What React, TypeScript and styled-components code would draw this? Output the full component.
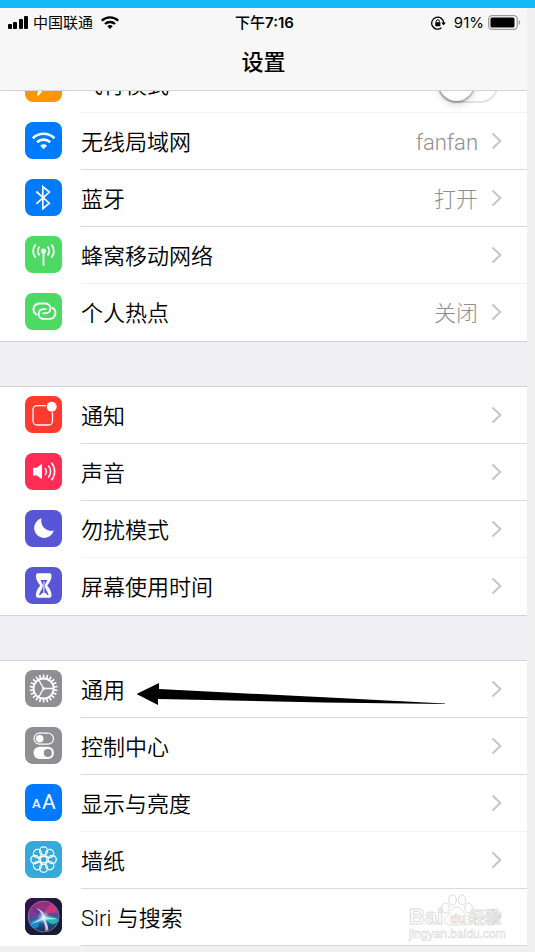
import React from 'react';
import styled, { createGlobalStyle, css } from 'styled-components';

const GlobalStyle = createGlobalStyle`
  *, *::before, *::after { box-sizing: border-box; }
  body {
    margin: 0;
    background: #f0f0f0;
    color: #000;
    font-family: Roboto, "Noto Sans CJK SC", sans-serif;
  }
`;

const Page = styled.div`
  min-height: 100vh;
  padding-right: 8px;
  border-top: 8px solid #14b9f8;
`;

const Header = styled.header`
  background: #f7f7f7;
  border-top: 1px solid #fff;
  border-bottom: 1px solid #d4d4d6;
`;

const StatusBar = styled.div`
  display: grid;
  grid-template-columns: 1fr auto 1fr;
  align-items: center;
  height: 27px;
  padding: 0 6px 0 8px;
  font-family: Inter, "Noto Sans CJK SC", sans-serif;
  font-size: 15px;
  line-height: 20px;
`;

const StatusGroup = styled.div<{ $end?: boolean }>`
  display: flex;
  align-items: center;
  justify-content: ${(p) => (p.$end ? 'flex-end' : 'flex-start')};
  gap: ${(p) => (p.$end ? '4px' : '5px')};

  & > svg { flex: none; }
`;

const Carrier = styled.span`
  margin-right: 3px;
`;

const Percent = styled.span`
  margin-left: 4px;
`;

const Clock = styled.time`
  font-weight: 500;

  b { font-weight: 600; }
`;

const Title = styled.h1`
  margin: 0;
  font-size: 22px;
  font-weight: 500;
  line-height: 54px;
  text-align: center;
`;

const Main = styled.main`
  display: flex;
  flex-direction: column;
  gap: 44px;
  background: #efeff4;
`;

const Section = styled.ul<{ $first?: boolean; $last?: boolean }>`
  margin: 0;
  padding: 0;
  list-style: none;
  background: #fff;
  border-top: ${(p) => (p.$first ? '0' : '1px')} solid #d2d2d6;
  border-bottom: ${(p) => (p.$last ? '0' : '1px')} solid #d2d2d6;
`;

const Item = styled.li<{ $clipped?: boolean }>`
  position: relative;
  display: flex;
  align-items: flex-end;
  height: ${(p) => (p.$clipped ? '22px' : 'auto')};
  overflow: ${(p) => (p.$clipped ? 'hidden' : 'visible')};
`;

const rowLayout = css`
  flex: 1;
  display: flex;
  align-items: center;
  height: 57px;
  padding-left: 25px;
`;

const RowLink = styled.a`
  ${rowLayout}
  color: inherit;
  text-decoration: none;
`;

const SwitchRow = styled.label`
  ${rowLayout}
`;

const IconTile = styled.span<{ $color: string }>`
  flex: none;
  width: 37px;
  height: 37px;
  margin: 0 19px 3px 0;
  border-radius: 8px;
  overflow: hidden;
  background: ${(p) => p.$color};

  svg { display: block; }
`;

const RowBody = styled.span<{ $line: string }>`
  flex: 1;
  display: flex;
  align-items: center;
  height: 57px;
  padding-right: 25px;
  border-bottom: 1px solid ${(p) => p.$line};
  font-size: 22px;
  font-weight: 350;
  line-height: 32px;
`;

const Label = styled.span`
  flex: 1;
  padding-top: 4px;
`;

const Value = styled.span`
  margin-right: 13px;
  padding-top: 4px;
  color: #8e8e93;
  font-weight: 300;
`;

const Switch = styled.input`
  appearance: none;
  width: 62px;
  height: 38px;
  margin: 0 3px 0 0;
  border: 2px solid #e3e3e5;
  border-radius: 19px;
  background: #fff;

  &::before {
    content: '';
    display: block;
    width: 35px;
    height: 35px;
    margin-top: -1px;
    border-radius: 50%;
    background: #fff;
    box-shadow: 0 1px 3px rgba(0, 0, 0, 0.5), 0 4px 9px rgba(0, 0, 0, 0.12);
  }
`;

const ArrowMark = styled.svg`
  position: absolute;
  left: 136px;
  top: 21px;
  pointer-events: none;
`;

const Watermark = styled.svg`
  position: absolute;
  right: 17px;
  bottom: 4px;
  pointer-events: none;
  font-family: "Liberation Sans", "Noto Sans CJK SC", sans-serif;
  font-weight: 700;
`;

const Chevron = () => (
  <svg width="11" height="18" viewBox="0 0 11 18" fill="none" aria-hidden="true">
    <path d="M1.5 1.5 9.3 9 1.5 16.5" stroke="#c4c4c9" strokeWidth="2" />
  </svg>
);

const Glyph = ({ children }: { children: React.ReactNode }) => (
  <svg width="37" height="37" viewBox="0 0 37 37" fill="none" stroke="#fff" aria-hidden="true">
    {children}
  </svg>
);

const AirplaneGlyph = () => (
  <Glyph>
    <path d="M30 18.500c0-1.300-1.500-1.800-3-1.800h-5.500L14 6.500h-2.300l3.500 10.200H10l-2.200-2.700H6l1.300 4.500L6 23h1.800l2.200-2.700h5.200L11.700 30.500H14l7.500-10.200H27c1.500 0 3-.5 3-1.800z" fill="#fff" stroke="none" />
  </Glyph>
);

const WifiGlyph = () => (
  <Glyph>
    <path d="M7.800 16.200a15.400 15.400 0 0 1 21.600 0" strokeWidth="2.6" />
    <path d="M12 20.300a9.500 9.500 0 0 1 13.200 0" strokeWidth="2.6" />
    <path d="M15.200 23.700a4.700 4.700 0 0 1 6.800 0L18.600 27.200z" fill="#fff" stroke="none" />
  </Glyph>
);

const BluetoothGlyph = () => (
  <Glyph>
    <path d="m11.300 12.500 13 11.700-6.500 5.500V7.500l6.500 5.600-13 11.700" strokeWidth="1.7" />
  </Glyph>
);

const CellularGlyph = () => (
  <Glyph>
    <circle cx="18.5" cy="15" r="2.6" fill="#fff" stroke="none" />
    <path d="M18.5 15v15" strokeWidth="1.8" />
    <path d="M14.500 10.700a6.500 6.500 0 0 0 0 8.600M22.500 10.700a6.500 6.500 0 0 1 0 8.600" strokeWidth="1.8" />
    <path d="M10.700 8.400a10 10 0 0 0 0 13.200M26.300 8.400a10 10 0 0 1 0 13.200" strokeWidth="1.8" />
  </Glyph>
);

const HotspotGlyph = () => {
  const link = 'M11.500 21.500A5.900 5.900 0 0 1 14.500 10.500h6a4.900 4.900 0 0 1 0 9.800h-2.300';
  return (
    <Glyph>
      <path d={link} strokeWidth="1.9" strokeLinecap="round" />
      <path d={link} strokeWidth="1.9" strokeLinecap="round" transform="rotate(180 19.5 18.2)" />
    </Glyph>
  );
};

const NotificationGlyph = () => (
  <Glyph>
    <path d="M21 9.600h-9a4 4 0 0 0-4 4V25a4 4 0 0 0 4 4h11.500a4 4 0 0 0 4-4v-8.500" strokeWidth="1.3" />
    <circle cx="26.7" cy="10.8" r="5" fill="#fff" stroke="none" />
  </Glyph>
);

const SoundGlyph = () => (
  <Glyph>
    <path d="M8 14.700h3.800l5.200-3.900v15.500l-5.200-3.900H8z" fill="#fff" stroke="none" />
    <path d="M20 15.200a5.500 5.500 0 0 1 0 6.800M23.300 12.500a9 9 0 0 1 0 12M26.400 9.700a13.500 13.500 0 0 1 0 17.600" strokeWidth="1.5" />
  </Glyph>
);

const MoonGlyph = () => (
  <Glyph>
    <path d="M16.500 8.300A10 10 0 1 0 28.800 20.600 10.200 10.200 0 0 1 16.500 8.300z" fill="#fff" stroke="none" />
  </Glyph>
);

const HourglassGlyph = () => (
  <Glyph>
    <path d="M11 8.500A2 2 0 0 1 13 6.300h11.500a2 2 0 0 1 2 2.200c0 5-2.200 7.200-4.300 10 2.100 2.800 4.300 5 4.300 10a2 2 0 0 1-2 2.200H13a2 2 0 0 1-2-2.200c0-5 2.200-7.200 4.300-10C13.200 15.700 11 13.500 11 8.500z" fill="#fff" stroke="none" />
    <path d="M15.500 13h6.800c-.6 2-2.200 3.300-2.400 5.500 0 3.500 2.400 5.300 3.700 9.500H14c1.300-4.200 3.800-6 3.800-9.500-.2-2.200-1.700-3.500-2.300-5.500z" fill="#5856d6" stroke="none" />
    <path d="M18.900 14.500V26l3 1.500h-6l3-1.500" strokeWidth="1" fill="#fff" />
  </Glyph>
);

const teeth = Array.from({ length: 22 }, (_, i) => (i * 360) / 22);
const petals = [0, 45, 90, 135, 180, 225, 270, 315];

const GearGlyph = () => (
  <Glyph>
    <circle cx="18.6" cy="18.5" r="10" strokeWidth="1.8" />
    {teeth.map((angle) => (
      <path key={angle} d="M18.6 8.500V4.500" strokeWidth="1.7" transform={`rotate(${angle} 18.6 18.5)`} />
    ))}
    {[90, 210, 330].map((angle) => (
      <path key={angle} d="M18.6 18.500V9" strokeWidth="1.4" transform={`rotate(${angle} 18.6 18.5)`} />
    ))}
    <circle cx="18.6" cy="18.5" r="1.5" fill="#fff" stroke="none" />
  </Glyph>
);

const ControlGlyph = () => (
  <Glyph>
    <rect x="9" y="6.2" width="19.5" height="11" rx="5.5" strokeWidth="1.2" />
    <circle cx="14.7" cy="11.7" r="3.8" fill="#fff" stroke="none" />
    <rect x="8.5" y="19.8" width="20.5" height="12.2" rx="6.1" fill="#fff" stroke="none" />
    <circle cx="22.8" cy="25.9" r="4" fill="#8e8e93" stroke="none" />
  </Glyph>
);

const DisplayGlyph = () => (
  <Glyph>
    <g fill="#fff" stroke="none" fontFamily="Roboto, sans-serif">
      <text x="7" y="24" fontSize="13" fontWeight="500">A</text>
      <text x="17" y="25" fontSize="21" fontWeight="400">A</text>
    </g>
  </Glyph>
);

const WallpaperGlyph = () => (
  <Glyph>
    {petals.map((angle) => (
      <circle key={angle} cx="18.6" cy="10" r="4.1" strokeWidth="1.3" transform={`rotate(${angle} 18.6 18.6)`} />
    ))}
    <circle cx="18.6" cy="18.6" r="3.2" strokeWidth="1.1" />
    {petals.map((angle) => (
      <path key={angle} d="M18.6 15.400 20.300 13.400" strokeWidth="0.9" transform={`rotate(${angle} 18.6 18.6)`} />
    ))}
  </Glyph>
);

const SiriGlyph = () => (
  <Glyph>
    <defs>
      <linearGradient id="siriBack" x1="0" y1="0" x2="1" y2="1">
        <stop offset="0" stopColor="#3c0f52" />
        <stop offset="0.5" stopColor="#1c1a3c" />
        <stop offset="1" stopColor="#10202e" />
      </linearGradient>
      <linearGradient id="siriOrb" x1="0.4" y1="0" x2="0.5" y2="1">
        <stop offset="0" stopColor="#a02a78" />
        <stop offset="0.4" stopColor="#7a3a92" />
        <stop offset="0.65" stopColor="#1c6ca4" />
        <stop offset="1" stopColor="#142c52" />
      </linearGradient>
      <radialGradient id="siriCore">
        <stop offset="0" stopColor="#fff" />
        <stop offset="0.35" stopColor="#bfeaff" stopOpacity="0.7" />
        <stop offset="1" stopColor="#59c3ff" stopOpacity="0" />
      </radialGradient>
    </defs>
    <rect width="37" height="37" fill="url(#siriBack)" stroke="none" />
    <circle cx="18.6" cy="18.5" r="15.5" fill="url(#siriOrb)" stroke="#8878a0" strokeWidth="0.9" />
    <g stroke="none">
      <path d="M18 19C12 17 8 13 7 9c5 1 10 5 11 10z" fill="#6a2aa0" opacity="0.6" />
      <path d="M18 20C12 20 6 23 4.500 26 7 31 11 31 13 29c1-4 3-7 5-9z" fill="#20a5e8" opacity="0.65" />
      <path d="M18 19c6-2 11-1 15.500 3-2 4-6 5-9 3-2-2-4-4-6.500-6z" fill="#22c8b0" opacity="0.85" />
      <path d="M19 18c1-6 4-11 8-12 4 3 5 6 5 9-5-1-9 0-13 3z" fill="#e03a78" opacity="0.75" />
      <path d="M18 19c3 3 5 8 5.500 13l-3 1C20 28 19 23 18 19z" fill="#f19ad0" />
      <path d="M18 19C16 14 13 11 11 10c4 1 8 4 9 9l13 2-13 .5L23 31l-5-9-12 4z" fill="#fff" opacity="0.75" />
      <circle cx="18.5" cy="19.5" r="7" fill="url(#siriCore)" />
    </g>
  </Glyph>
);

type Setting = {
  label: string;
  color: string;
  icon: React.ReactNode;
  value?: string;
  line?: string;
  extra?: React.ReactNode;
};

const LINE = '#d9d9db';
const FAINT = '#f3f3f4';

const PointerArrow = () => (
  <ArrowMark width="312" height="26" viewBox="0 0 312 26" aria-hidden="true">
    <path d="M.5 12 23 1v6l165 8.300 121 6.200v.5L188 20.500 22 17v6z" fill="#000" />
  </ArrowMark>
);

const BaiduMark = () => (
  <Watermark width="104" height="50" viewBox="0 0 104 50" aria-hidden="true">
    <g fill="#fff" fillOpacity="0.85" stroke="#dcdcdc" strokeWidth="1">
      <ellipse cx="39.5" cy="16" rx="3.8" ry="5" />
      <ellipse cx="46.5" cy="8" rx="3.8" ry="5.2" />
      <ellipse cx="56" cy="8" rx="3.8" ry="5.2" />
      <ellipse cx="62.5" cy="16" rx="3.8" ry="5" />
      <path d="M51 15c4 0 5 4 9 8 6 5 3 10-2 10H44c-5 0-8-5-2-10 4-4 5-8 9-8z" />
      <text x="3" y="32" fontSize="22">Bai</text>
      <text x="44" y="31" fontSize="13">du</text>
      <text x="63" y="31" fontSize="16">经验</text>
      <text x="3" y="46" fontSize="12" fontWeight="400" strokeWidth="0.6">jingyan.baidu.com</text>
    </g>
  </Watermark>
);

const network: Setting[] = [
  { label: '无线局域网', color: '#007aff', icon: <WifiGlyph />, value: 'fanfan' },
  { label: '蓝牙', color: '#007aff', icon: <BluetoothGlyph />, value: '打开' },
  { label: '蜂窝移动网络', color: '#4cd964', icon: <CellularGlyph />, line: FAINT },
  { label: '个人热点', color: '#4cd964', icon: <HotspotGlyph />, value: '关闭', line: 'transparent' },
];

const alerts: Setting[] = [
  { label: '通知', color: '#ff3b30', icon: <NotificationGlyph /> },
  { label: '声音', color: '#ff2d55', icon: <SoundGlyph /> },
  { label: '勿扰模式', color: '#5856d6', icon: <MoonGlyph />, line: FAINT },
  { label: '屏幕使用时间', color: '#5856d6', icon: <HourglassGlyph />, line: 'transparent' },
];

const system: Setting[] = [
  { label: '通用', color: '#8e8e93', icon: <GearGlyph />, extra: <PointerArrow /> },
  { label: '控制中心', color: '#8e8e93', icon: <ControlGlyph /> },
  { label: '显示与亮度', color: '#007aff', icon: <DisplayGlyph />, line: FAINT },
  { label: '墙纸', color: '#34aadc', icon: <WallpaperGlyph /> },
  { label: 'Siri 与搜索', color: '#1c1a3c', icon: <SiriGlyph />, extra: <BaiduMark /> },
];

const SettingItem = ({ label, color, icon, value, line = LINE, extra }: Setting) => (
  <Item>
    <RowLink href="#">
      <IconTile $color={color}>{icon}</IconTile>
      <RowBody $line={line}>
        <Label>{label}</Label>
        {value && <Value>{value}</Value>}
        <Chevron />
      </RowBody>
    </RowLink>
    {extra}
  </Item>
);

const renderItems = (items: Setting[]) => items.map((item) => <SettingItem key={item.label} {...item} />);

export default function App() {
  return (
    <Page>
      <GlobalStyle />
      <Header>
        <StatusBar>
          <StatusGroup>
            <svg width="20" height="13" viewBox="0 0 20 13" aria-hidden="true">
              <rect x="0" y="8" width="4" height="5" rx="1" />
              <rect x="5" y="6" width="4" height="7" rx="1" />
              <rect x="11" y="3" width="4" height="10" rx="1" />
              <rect x="16" y="0" width="4" height="13" rx="1" />
            </svg>
            <Carrier>中国联通</Carrier>
            <svg width="18" height="13" viewBox="0 0 18 13" fill="none" stroke="#000" strokeWidth="2.4" aria-hidden="true">
              <path d="M.8 4.700a11.700 11.700 0 0 1 16.400 0M4 8a7.200 7.200 0 0 1 10 0" />
              <path d="M6.300 10.300a3.900 3.900 0 0 1 5.400 0L9 13z" fill="#000" stroke="none" />
            </svg>
          </StatusGroup>
          <Clock>下午<b>7:16</b></Clock>
          <StatusGroup $end>
            <svg width="15" height="14" viewBox="0 0 15 14" fill="none" stroke="#000" aria-hidden="true">
              <path d="M10.500 11.800A6 6 0 1 1 12.700 7" strokeWidth="1.3" />
              <path d="M10.200 6.500h4.600l-2.300 3z" fill="#000" stroke="none" />
              <rect x="4.2" y="6.2" width="5.2" height="4" rx="0.5" fill="#000" stroke="none" />
              <path d="M5.200 6.500V5.300a1.600 1.600 0 0 1 3.200 0v1.200" strokeWidth="1" />
            </svg>
            <Percent>91%</Percent>
            <svg width="33" height="15" viewBox="0 0 33 15" aria-hidden="true">
              <rect x="0.7" y="0.7" width="28.6" height="13.6" rx="3.5" fill="#fff" stroke="#9b9b9b" strokeWidth="1.3" />
              <rect x="2.5" y="2.5" width="24" height="10" rx="1.5" />
              <path d="M30.800 5v5c1.800-.8 1.800-4.200 0-5z" fill="#9b9b9b" />
            </svg>
          </StatusGroup>
        </StatusBar>
        <Title>设置</Title>
      </Header>
      <Main>
        <Section $first>
          <Item $clipped>
            <SwitchRow>
              <IconTile $color="#ff9500"><AirplaneGlyph /></IconTile>
              <RowBody $line={FAINT}>
                <Label>飞行模式</Label>
                <Switch type="checkbox" role="switch" />
              </RowBody>
            </SwitchRow>
          </Item>
          {renderItems(network)}
        </Section>
        <Section>{renderItems(alerts)}</Section>
        <Section $last>{renderItems(system)}</Section>
      </Main>
    </Page>
  );
}
